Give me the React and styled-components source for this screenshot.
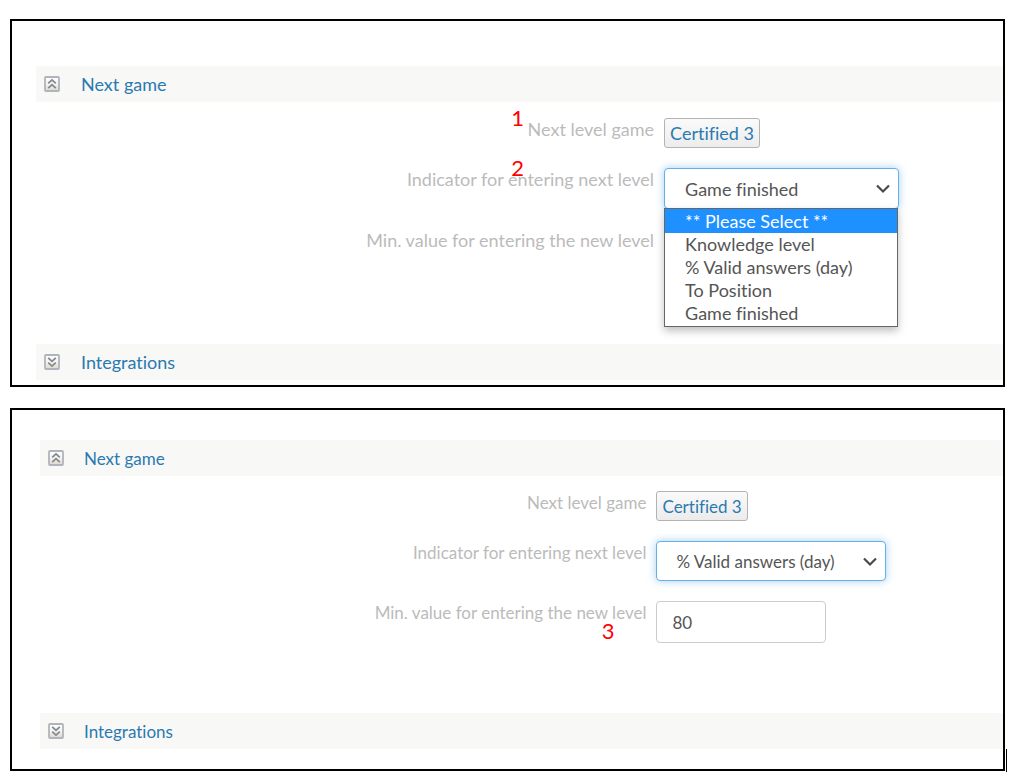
import React, { useId } from "react";
import styled, { createGlobalStyle, css } from "styled-components";

const GlobalStyle = createGlobalStyle`
  *, *::before, *::after { box-sizing: border-box; }
  body {
    margin: 0;
    background: #fff;
    color: #555;
    font-family: Lato, "Liberation Sans", sans-serif;
    font-size: 17px;
    font-variant-ligatures: no-common-ligatures;
    line-height: 24px;
  }
`;

const Page = styled.main`
  display: flex;
  flex-direction: column;
  gap: 21px;
  padding: 19px 8px 8px 10px;
`;

const Panel = styled.section`
  position: relative;
  border: 2px solid #000;
  padding: ${({ $wide }) => ($wide ? "45px 0 5px 24px" : "30px 0 20px 28px")};
  font-size: ${({ $wide }) => ($wide ? "18px" : "17px")};
  line-height: ${({ $wide }) => ($wide ? "22px" : "24px")};
`;

const SectionHeader = styled.header`
  display: flex;
  align-items: center;
  gap: ${({ $wide }) => ($wide ? "21px" : "20px")};
  height: 36px;
  padding: 0 8px;
  background: #f8f8f7;
`;

const ToggleButton = styled.button`
  display: block;
  width: 16px;
  height: 16px;
  padding: 0;
  border: 0;
  background: none;
  cursor: pointer;

  svg { display: block; }
`;

const SectionLink = styled.a`
  padding-top: ${({ $wide }) => ($wide ? "0" : "2px")};
  color: #2a7ab0;
  text-decoration: none;
`;

const Form = styled.form`
  display: flex;
  flex-direction: column;
  gap: 20px;
  padding: ${({ $wide }) => ($wide ? "16px 0 75px" : "15px 0 70px")};
`;

const Row = styled.div`
  display: grid;
  grid-template-columns: ${({ $wide }) =>
    $wide ? "minmax(0, 31fr) minmax(0, 17fr)" : "minmax(0, 7fr) minmax(0, 4fr)"};
  column-gap: 10px;
  align-items: start;
  min-height: ${({ $tall }) => ($tall ? "40px" : "30px")};
`;

const Label = styled.label`
  position: relative;
  justify-self: end;
  color: #bbb;
  text-align: right;
`;

const Marker = styled.span`
  position: absolute;
  top: ${({ $top }) => $top}px;
  right: ${({ $right }) => $right}px;
  color: #f00;
  font-size: 22px;
  line-height: 24px;
`;

const GameButton = styled.button`
  justify-self: start;
  height: 30px;
  padding: ${({ $wide }) => ($wide ? "0" : "2px")} 5px 0;
  border: 1px solid #b3b3b3;
  border-radius: 3px;
  background: linear-gradient(#fafafa, #ececec);
  color: #2a7ab0;
  font: inherit;
  cursor: pointer;
`;

const SelectBox = styled.div`
  position: relative;
  width: ${({ $wide }) => ($wide ? "235px" : "230px")};
`;

const fieldStyle = css`
  display: block;
  border: 1px solid #ccc;
  border-radius: 4px;
  background: #fff;
  color: #555;
  font: inherit;
  outline: none;
`;

const Select = styled.select`
  ${fieldStyle}
  appearance: none;
  width: 100%;
  height: ${({ $wide }) => ($wide ? "41px" : "40px")};
  padding: ${({ $wide }) => ($wide ? "0 40px 0 20px" : "2px 40px 0 19px")};
  border-color: #66afe9;
  box-shadow: 0 0 8px rgba(102, 175, 233, 0.6);
`;

const Chevron = styled.svg`
  position: absolute;
  top: 16px;
  right: 9px;
  pointer-events: none;
`;

const Options = styled.ul`
  position: absolute;
  z-index: 1;
  top: 40px;
  left: 0;
  right: 1px;
  margin: 0;
  padding: 0 0 1px;
  border: 1px solid #666;
  background: #fff;
  box-shadow: 0 4px 8px rgba(0, 0, 0, 0.25);
  list-style: none;
`;

const Option = styled.li`
  height: 23px;
  padding-left: 20px;

  &[aria-selected="true"] {
    height: 24px;
    background: #1e90ff;
    color: #fff;
    line-height: 24px;
  }
`;

const ValueInput = styled.input`
  ${fieldStyle}
  width: 170px;
  height: 42px;
  padding: 0 15px;
`;

const Caret = styled.span`
  position: absolute;
  right: -4px;
  bottom: -3px;
  width: 1px;
  height: 23px;
  background: #000;
`;

const choices = [
  "** Please Select **",
  "Knowledge level",
  "% Valid answers (day)",
  "To Position",
  "Game finished",
];

function ToggleIcon({ open }) {
  const id = useId();
  return (
    <svg width="16" height="16" viewBox="0 0 16 16" aria-hidden="true">
      <defs>
        <linearGradient id={id} x1="0" y1="0" x2="0" y2="1">
          <stop offset="0" stopColor="#fdfdfd" />
          <stop offset="0.5" stopColor="#f4f4f3" />
          <stop offset="1" stopColor="#dfd8c8" />
        </linearGradient>
      </defs>
      <rect x="1" y="1" width="14" height="14" rx="1" fill={`url(#${id})`} stroke="#b0b4bc" strokeWidth="1.8" />
      <path
        d={open ? "M4.2 7.4 8 3.9l3.8 3.5M4.2 12.2 8 8.7l3.8 3.5" : "M4.2 3.8 8 7.3l3.8-3.5M4.2 8.6 8 12.1l3.8-3.5"}
        fill="none"
        stroke="#85888f"
        strokeWidth="1.8"
      />
    </svg>
  );
}

function Section({ title, open, wide }) {
  return (
    <SectionHeader $wide={wide}>
      <ToggleButton type="button" aria-expanded={open} aria-label={`Toggle ${title}`}>
        <ToggleIcon open={open} />
      </ToggleButton>
      <SectionLink href="#" $wide={wide}>{title}</SectionLink>
    </SectionHeader>
  );
}

function IndicatorSelect({ id, value, wide, expanded }) {
  return (
    <SelectBox $wide={wide}>
      <Select id={id} defaultValue={value} $wide={wide}>
        {choices.map((choice) => (
          <option key={choice}>{choice}</option>
        ))}
      </Select>
      <Chevron width="14" height="10" viewBox="0 0 14 10" aria-hidden="true">
        <path d="M1 1.5 7 7.5l6-6" fill="none" stroke="#4a4a4a" strokeWidth="2.2" />
      </Chevron>
      {expanded && (
        <Options role="listbox" aria-label="Indicator for entering next level">
          {choices.map((choice, index) => (
            <Option key={choice} role="option" aria-selected={index === 0}>
              {choice}
            </Option>
          ))}
        </Options>
      )}
    </SelectBox>
  );
}

export default function App() {
  return (
    <>
      <GlobalStyle />
      <Page>
        <Panel $wide>
          <Section title="Next game" open wide />
          <Form $wide>
            <Row $wide>
              <Label htmlFor="game-a">
                Next level game
                <Marker $top={-12} $right={130}>1</Marker>
              </Label>
              <GameButton id="game-a" type="button" $wide>Certified 3</GameButton>
            </Row>
            <Row $wide $tall>
              <Label htmlFor="indicator-a">
                Indicator for entering next level
                <Marker $top={-12} $right={130}>2</Marker>
              </Label>
              <IndicatorSelect id="indicator-a" value="Game finished" wide expanded />
            </Row>
            <Row $wide $tall>
              <Label>Min. value for entering the new level</Label>
            </Row>
          </Form>
          <Section title="Integrations" open={false} wide />
        </Panel>

        <Panel>
          <Section title="Next game" open />
          <Form>
            <Row>
              <Label htmlFor="game-b">Next level game</Label>
              <GameButton id="game-b" type="button">Certified 3</GameButton>
            </Row>
            <Row $tall>
              <Label htmlFor="indicator-b">Indicator for entering next level</Label>
              <IndicatorSelect id="indicator-b" value="% Valid answers (day)" />
            </Row>
            <Row $tall>
              <Label htmlFor="minimum-b">
                Min. value for entering the new level
                <Marker $top={18} $right={32}>3</Marker>
              </Label>
              <ValueInput id="minimum-b" type="text" defaultValue="80" />
            </Row>
          </Form>
          <Section title="Integrations" open={false} />
          <Caret />
        </Panel>
      </Page>
    </>
  );
}
